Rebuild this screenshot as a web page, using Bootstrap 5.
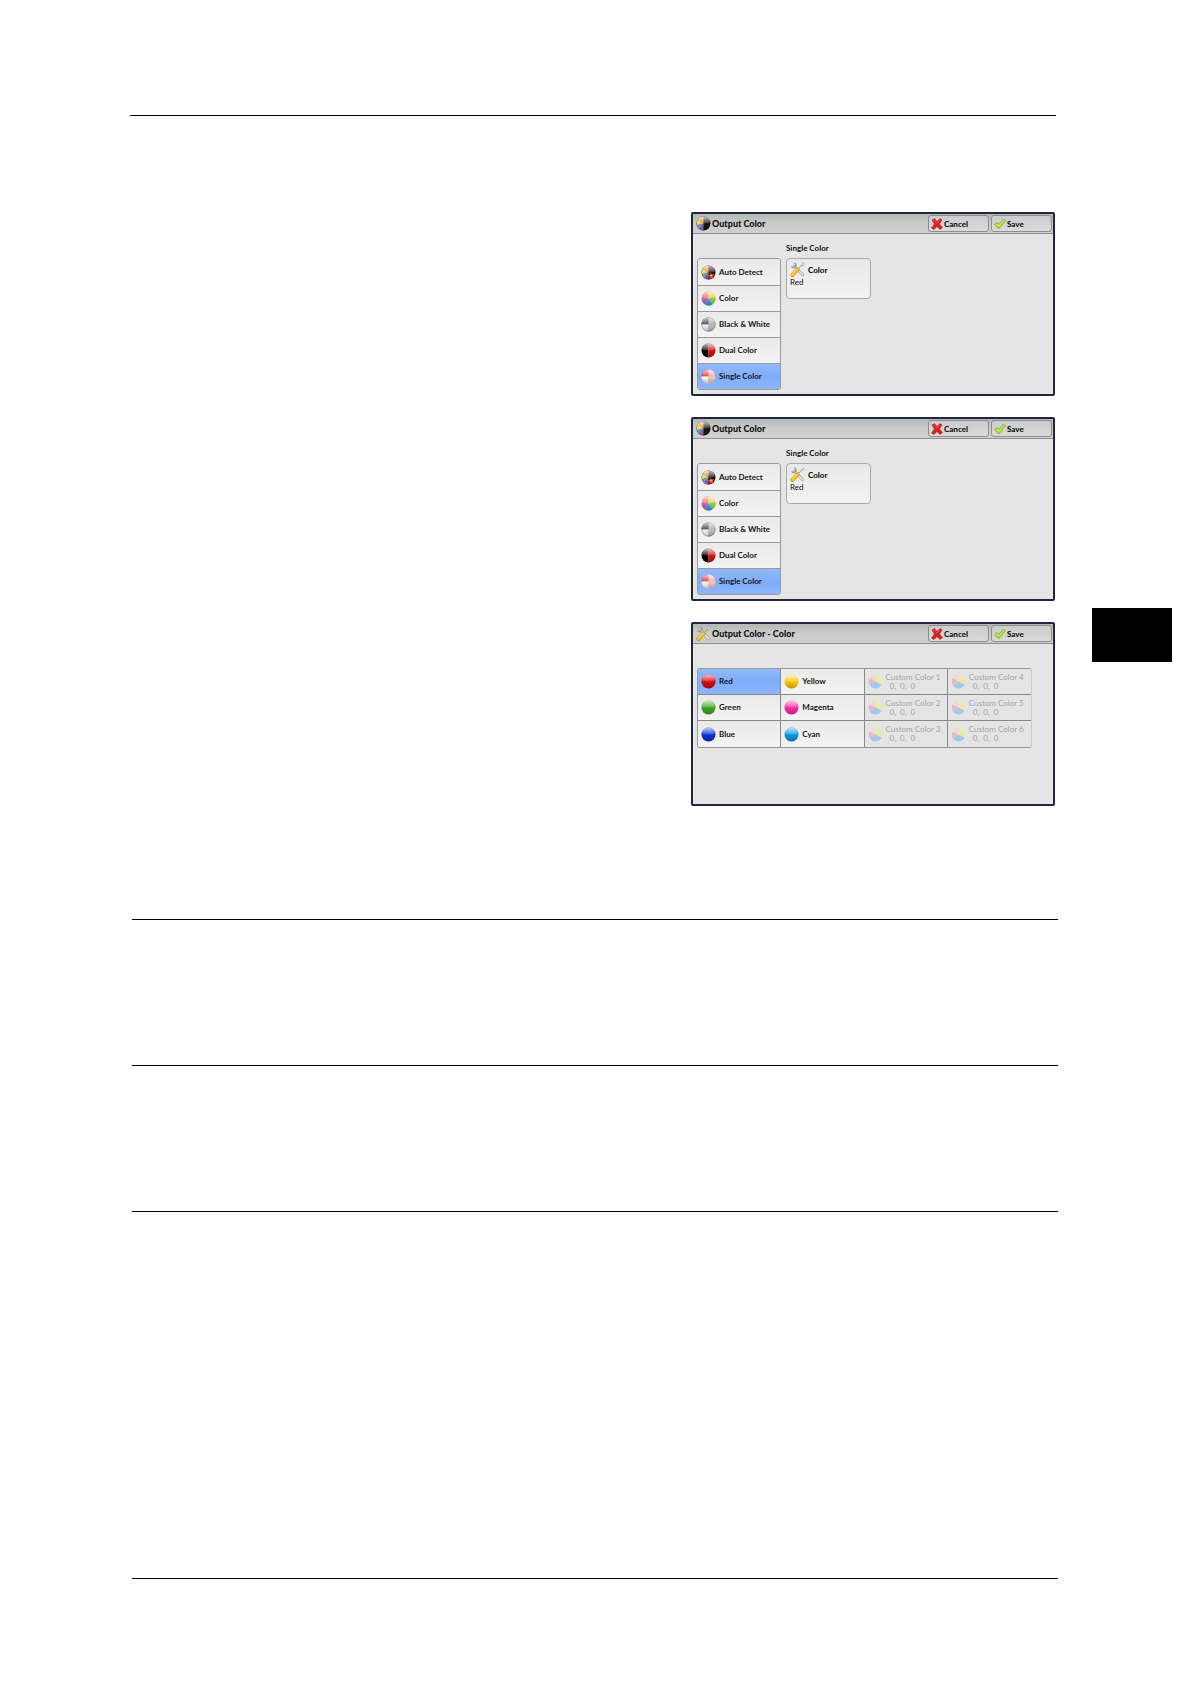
<!DOCTYPE html>
<html lang="en">
<head>
<meta charset="utf-8">
<meta name="viewport" content="width=device-width, initial-scale=1">
<title>Output Color</title>
<link href="https://cdn.jsdelivr.net/npm/bootstrap@5.3.0/dist/css/bootstrap.min.css" rel="stylesheet">
<style>
body{background:#fff;color:#111;font-family:Lato,"Open Sans",sans-serif;font-size:8px;line-height:10px;font-weight:700}
.sheet{padding:115px 132px 105px 130px}
.rule{height:1px;background:#000;opacity:1;border:0;margin:0}
.rule-top{margin-right:2px}
.rule-in{margin-left:2px}
.screens{padding-top:96px;gap:21px;margin-right:3px}
.panel{width:364px;height:184px;border:2px solid #20263f;border-radius:2px;background:#e5e5e5}
.panel-top{height:20px;background:linear-gradient(#b3b9b3,#cacbca 50%,#cfcfcf);border-bottom:1px solid #8f8f8f;padding:1px 1px 1px 3px}
.panel-title{font-size:9px;line-height:16px;margin:0;font-weight:900;gap:1px}
.actions{gap:2px}
.ui-btn{width:61px;height:17px;border:1px solid #8d8d8d;border-radius:3px;background:linear-gradient(#cbcbcb,#dadada);padding:0 0 0 2px;gap:1px;color:#111;font-weight:900;font-size:8px;line-height:10px}
.ui-btn svg{width:12px;height:12px}
.panel-main{padding:24px 4px 0;gap:5px}
.modes{width:84px;border:1px solid #999;border-radius:3px;overflow:hidden}
.cell{height:26px;border:0;padding:0 0 0 3px;gap:3px;background:linear-gradient(#eaeaea,#f3f3f3);color:#151515;font-weight:700;text-align:left;line-height:9px}
.modes .cell + .cell{border-top:1px solid #999}
.cell.chosen,.modes .cell.chosen{background:linear-gradient(#92b9fb,#7fadf9 50%,#8cb5fd)}
.option-title{font-size:8px;line-height:10px;margin:-15px 0 5px;font-weight:700}
.option{width:85px;height:41px;border:1px solid #aaa;border-radius:4px;background:linear-gradient(#e8e8e8,#f3f3f3);padding:3px 3px 0;color:#111;text-align:left;font-weight:400;line-height:10px}
.option b{font-weight:900}
.option-head{gap:3px}
.palette{display:grid;grid-template-columns:repeat(4,1fr);width:335px;border:1px solid #999;border-right-color:#ccc;border-radius:3px;overflow:hidden}
.palette .cell{border-right:1px solid #888;border-bottom:1px solid #888}
.palette .cell:nth-child(4n){border-right:0}
.palette .cell:nth-last-child(-n+4){border-bottom:0}
.palette .cell:disabled{background:#e4e4e4;color:#a4a4a4;font-weight:400;opacity:1}
.palette .cell:disabled svg{opacity:.35}
.rgb{padding-left:4px}
svg{width:15px;height:15px;flex:none}
svg.defs{width:0;height:0}
.tab-mark{position:absolute;top:608px;right:18px;width:80px;height:54px;background:#000}
.notes{padding-top:113px}
.notes .rule + .rule{margin-top:145px}
.notes .rule.rule-foot{margin-top:366px}
</style>
<script src="https://cdn.jsdelivr.net/npm/bootstrap@5.3.0/dist/js/bootstrap.bundle.min.js"></script>
</head>
<body>
<svg class="defs position-absolute" aria-hidden="true">
<defs>
<linearGradient id="shine" x1="0" y1="0" x2="0" y2="1"><stop offset="0" stop-color="#fff" stop-opacity=".75"/><stop offset="1" stop-color="#fff" stop-opacity=".15"/></linearGradient>
<linearGradient id="shade" x1="0" y1="0" x2="0" y2="1"><stop offset=".5" stop-color="#000" stop-opacity="0"/><stop offset="1" stop-color="#000" stop-opacity=".25"/></linearGradient>
</defs>
<symbol id="gloss" viewBox="0 0 30 30"><circle cx="15" cy="15" r="14" fill="url(#shade)"/><path d="M2 13A13 12 0 0 1 28 13Q15 17 2 13Z" fill="url(#shine)"/></symbol>
<symbol id="ball" viewBox="0 0 30 30"><circle cx="15" cy="15" r="14" fill="currentColor"/><use href="#gloss" width="30" height="30"/></symbol>
<symbol id="wheel" viewBox="0 0 30 30"><path d="M15 15V1A14 14 0 0 1 28 10Z" fill="#f3c94a"/><path d="M15 15 28 10A14 14 0 0 1 23 27Z" fill="#8fd14c"/><path d="M15 15 23 27A14 14 0 0 1 8 27Z" fill="#3ba7df"/><path d="M15 15 8 27A14 14 0 0 1 2 11Z" fill="#bd62d2"/><path d="M15 15 2 11A14 14 0 0 1 15 1Z" fill="#f0643f"/><use href="#gloss" width="30" height="30"/></symbol>
<symbol id="half" viewBox="0 0 30 30"><circle cx="15" cy="15" r="14" fill="#151515"/><path d="M15 15V1A14 14 0 0 0 3 8Z" fill="#f0803c"/><path d="M15 15 3 8A14 14 0 0 0 2 19Z" fill="#e6d44c"/><path d="M15 15 2 19A14 14 0 0 0 7 27Z" fill="#58b6e0"/><path d="M15 15 7 27A14 14 0 0 0 15 29Z" fill="#cc57cb"/><use href="#gloss" width="30" height="30"/></symbol>
<symbol id="auto" viewBox="0 0 30 30"><use href="#half" width="30" height="30"/><path d="M19 14l2 5 6-1-3 5 3 4-6-1-4 3 0-5-4-3 5-2z" fill="#e2401c"/><path d="M20 19l3 1-2 3-3-1z" fill="#ffe1a8"/></symbol>
<symbol id="mono" viewBox="0 0 30 30"><circle cx="15" cy="15" r="14" fill="#a8a8a8"/><path d="M15 15H1A14 14 0 0 1 15 1Z" fill="#333"/><path d="M15 15H1A14 14 0 0 0 15 29Z" fill="#fafafa"/><path d="M15 15H29A14 14 0 0 1 15 29Z" fill="#c4c4c4"/><circle cx="15" cy="15" r="13.500" fill="none" stroke="#888"/><use href="#gloss" width="30" height="30"/></symbol>
<symbol id="dual" viewBox="0 0 30 30"><path d="M15 1A14 14 0 0 0 15 29Z" fill="#080808"/><path d="M15 1A14 14 0 0 1 15 29Z" fill="#d61212"/><use href="#gloss" width="30" height="30"/></symbol>
<symbol id="single" viewBox="0 0 30 30"><circle cx="15" cy="15" r="14" fill="#f0a8a4"/><path d="M15 15H1A14 14 0 0 1 15 1Z" fill="#d82c2c"/><path d="M15 15H1A14 14 0 0 0 15 29Z" fill="#fff"/><path d="M15 15H29A14 14 0 0 1 15 29Z" fill="#f8cdc8"/><use href="#gloss" width="30" height="30"/></symbol>
<symbol id="tools" viewBox="0 0 30 30"><path d="M8 8 26 26" stroke="#8f8f8f" stroke-width="5" stroke-linecap="round"/><path d="M8 8 26 26" stroke="#eee" stroke-width="3" stroke-linecap="round"/><path d="M3 9Q8 13 11 9T9 2" fill="none" stroke="#999" stroke-width="3"/><path d="M15 15 25 5" stroke="#999" stroke-width="2"/><path d="M23 5l4-3 2 2-3 4z" fill="#eee" stroke="#888"/><path d="M5 26 15 15" stroke="#b98211" stroke-width="8" stroke-linecap="round"/><path d="M5 26 15 15" stroke="#f6c52c" stroke-width="6" stroke-linecap="round"/><path d="M4 24 13 14" stroke="#ffe893" stroke-width="1.500"/></symbol>
<symbol id="cross" viewBox="0 0 24 24"><path d="M2 4 7 1 12 7 18 1 22 4 17 12 23 19 18 23 12 17 6 23 1 20 7 12Z" fill="#dc1e1e" stroke="#981414"/><path d="M4 5l2-1 6 6 6-6" fill="none" stroke="#f77"/></symbol>
<symbol id="tick" viewBox="0 0 24 24"><path d="M1 14 5 9 10 12 19 2 23 5 10 22Z" fill="#a6dc2c" stroke="#6b9c1c"/><path d="M4 12l6 4L20 5" fill="none" stroke="#dcf78c" stroke-width="1.500"/></symbol>
<symbol id="custom" viewBox="0 0 30 30"><path d="M15 15 13 1A14 14 0 0 1 27 21Z" fill="#fbf046"/><path d="M15 15 27 21A13 13 0 0 1 4 23Z" fill="#2e96ff"/><path d="M15 15 4 23A14 14 0 0 1 3 9Z" fill="#f2609c"/><path d="M3 9A14 14 0 0 1 13 1L15 15Z" fill="#ffc2bc"/></symbol>
</svg>

<div class="sheet position-relative">
  <hr class="rule rule-top">
  <main class="screens d-flex flex-column align-items-end">
    <section class="panel">
      <header class="panel-top d-flex">
        <h2 class="panel-title d-flex align-items-center me-auto"><svg><use href="#half"/></svg>Output Color</h2>
        <div class="actions d-flex"><button class="ui-btn d-flex align-items-center"><svg><use href="#cross"/></svg>Cancel</button><button class="ui-btn d-flex align-items-center"><svg><use href="#tick"/></svg>Save</button></div>
      </header>
      <div class="panel-main d-flex align-items-start">
        <div class="modes d-flex flex-column">
          <button class="cell d-flex align-items-center"><svg><use href="#auto"/></svg>Auto Detect</button>
          <button class="cell d-flex align-items-center"><svg><use href="#wheel"/></svg>Color</button>
          <button class="cell d-flex align-items-center"><svg><use href="#mono"/></svg>Black &amp; White</button>
          <button class="cell d-flex align-items-center"><svg><use href="#dual"/></svg>Dual Color</button>
          <button class="cell chosen d-flex align-items-center"><svg><use href="#single"/></svg>Single Color</button>
        </div>
        <div>
          <h3 class="option-title">Single Color</h3>
          <button class="option d-flex flex-column align-items-start"><span class="option-head d-flex align-items-center"><svg><use href="#tools"/></svg><b>Color</b></span><span>Red</span></button>
        </div>
      </div>
    </section>
    <section class="panel">
      <header class="panel-top d-flex">
        <h2 class="panel-title d-flex align-items-center me-auto"><svg><use href="#half"/></svg>Output Color</h2>
        <div class="actions d-flex"><button class="ui-btn d-flex align-items-center"><svg><use href="#cross"/></svg>Cancel</button><button class="ui-btn d-flex align-items-center"><svg><use href="#tick"/></svg>Save</button></div>
      </header>
      <div class="panel-main d-flex align-items-start">
        <div class="modes d-flex flex-column">
          <button class="cell d-flex align-items-center"><svg><use href="#auto"/></svg>Auto Detect</button>
          <button class="cell d-flex align-items-center"><svg><use href="#wheel"/></svg>Color</button>
          <button class="cell d-flex align-items-center"><svg><use href="#mono"/></svg>Black &amp; White</button>
          <button class="cell d-flex align-items-center"><svg><use href="#dual"/></svg>Dual Color</button>
          <button class="cell chosen d-flex align-items-center"><svg><use href="#single"/></svg>Single Color</button>
        </div>
        <div>
          <h3 class="option-title">Single Color</h3>
          <button class="option d-flex flex-column align-items-start"><span class="option-head d-flex align-items-center"><svg><use href="#tools"/></svg><b>Color</b></span><span>Red</span></button>
        </div>
      </div>
    </section>
    <section class="panel">
      <header class="panel-top d-flex">
        <h2 class="panel-title d-flex align-items-center me-auto"><svg><use href="#tools"/></svg>Output Color - Color</h2>
        <div class="actions d-flex"><button class="ui-btn d-flex align-items-center"><svg><use href="#cross"/></svg>Cancel</button><button class="ui-btn d-flex align-items-center"><svg><use href="#tick"/></svg>Save</button></div>
      </header>
      <div class="panel-main">
        <div class="palette">
          <button class="cell chosen d-flex align-items-center"><svg color="#d80c0c"><use href="#ball"/></svg>Red</button>
          <button class="cell d-flex align-items-center"><svg color="#fbc80a"><use href="#ball"/></svg>Yellow</button>
          <button class="cell d-flex align-items-center" disabled><svg><use href="#custom"/></svg><span>Custom Color 1<span class="rgb d-block">0, &nbsp;0, &nbsp;0</span></span></button>
          <button class="cell d-flex align-items-center" disabled><svg><use href="#custom"/></svg><span>Custom Color 4<span class="rgb d-block">0, &nbsp;0, &nbsp;0</span></span></button>
          <button class="cell d-flex align-items-center"><svg color="#3fa620"><use href="#ball"/></svg>Green</button>
          <button class="cell d-flex align-items-center"><svg color="#f92ca4"><use href="#ball"/></svg>Magenta</button>
          <button class="cell d-flex align-items-center" disabled><svg><use href="#custom"/></svg><span>Custom Color 2<span class="rgb d-block">0, &nbsp;0, &nbsp;0</span></span></button>
          <button class="cell d-flex align-items-center" disabled><svg><use href="#custom"/></svg><span>Custom Color 5<span class="rgb d-block">0, &nbsp;0, &nbsp;0</span></span></button>
          <button class="cell d-flex align-items-center"><svg color="#0a34d4"><use href="#ball"/></svg>Blue</button>
          <button class="cell d-flex align-items-center"><svg color="#0d98dc"><use href="#ball"/></svg>Cyan</button>
          <button class="cell d-flex align-items-center" disabled><svg><use href="#custom"/></svg><span>Custom Color 3<span class="rgb d-block">0, &nbsp;0, &nbsp;0</span></span></button>
          <button class="cell d-flex align-items-center" disabled><svg><use href="#custom"/></svg><span>Custom Color 6<span class="rgb d-block">0, &nbsp;0, &nbsp;0</span></span></button>
        </div>
      </div>
    </section>
  </main>
  <div class="notes">
    <hr class="rule rule-in"><hr class="rule rule-in"><hr class="rule rule-in"><hr class="rule rule-in rule-foot">
  </div>
  <div class="tab-mark"></div>
</div>
</body>
</html>
